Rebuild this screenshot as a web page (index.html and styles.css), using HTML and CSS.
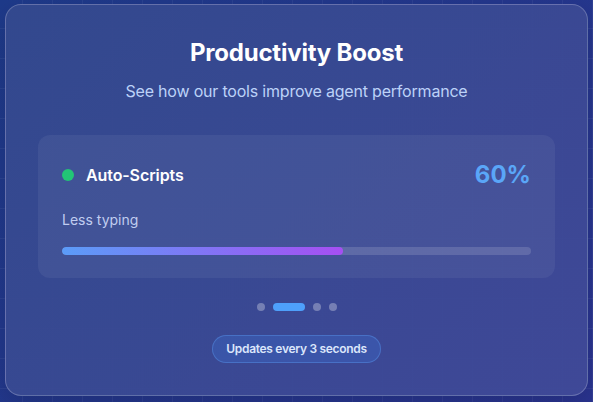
FILE: index.html
```html
<!DOCTYPE html>
<html lang="en">
<head>
<meta charset="utf-8">
<title>Productivity Boost</title>
<link rel="stylesheet" href="styles.css">
</head>
<body>
  <main class="card">
    <header class="card-head">
      <h1 class="title">Productivity Boost</h1>
      <p class="subtitle">See how our tools improve agent performance</p>
    </header>

    <section class="metric">
      <div class="metric-head">
        <div class="metric-name">
          <span class="status-dot"></span>
          <span class="name">Auto-Scripts</span>
        </div>
        <span class="value">60%</span>
      </div>
      <p class="metric-desc">Less typing</p>
      <div class="track"><div class="fill" style="width: 60%"></div></div>
    </section>

    <nav class="pager">
      <span class="dot"></span>
      <span class="dot active"></span>
      <span class="dot"></span>
      <span class="dot"></span>
    </nav>

    <div class="badge-row">
      <span class="badge">Updates every 3 seconds</span>
    </div>
  </main>
</body>
</html>
```

FILE: styles.css
```css
* { box-sizing: border-box; }

html, body { height: 100%; }

body {
  margin: 0;
  padding: 4px 5px 6px 5px;
  font-family: Inter, "Noto Sans", "Liberation Sans", sans-serif;
  color: #ffffff;
  background-color: #1f3585;
  background-image:
    linear-gradient(to right, rgba(255,255,255,0.05) 1px, transparent 1px),
    linear-gradient(to bottom, rgba(255,255,255,0.05) 1px, transparent 1px),
    linear-gradient(135deg, #1e3a8a 0%, #2a3490 100%);
  background-size: 30px 30px, 30px 30px, 100% 100%;
  background-position: 22px 28px, 22px 28px, 0 0;
}

.card {
  display: flex;
  flex-direction: column;
  padding: 32px;
  border: 1px solid rgba(255,255,255,0.22);
  border-radius: 16px;
  background: linear-gradient(135deg, rgba(52,73,142,0.95) 0%, rgba(64,74,152,0.95) 100%);
  box-shadow: 0 10px 30px rgba(0,0,0,0.15);
}

.card-head {
  text-align: center;
  margin-bottom: 32px;
}

.title {
  margin: 0;
  font-size: 24px;
  line-height: 32px;
  font-weight: 700;
  letter-spacing: -0.2px;
}

.subtitle {
  margin: 10px 0 0;
  font-size: 16px;
  line-height: 24px;
  letter-spacing: -0.2px;
  color: #bcd2f8;
}

.metric {
  padding: 24px 24px 23px;
  border-radius: 12px;
  background: rgba(255,255,255,0.055);
}

.metric-head {
  display: flex;
  align-items: center;
  justify-content: space-between;
}

.metric-name {
  display: flex;
  align-items: center;
  gap: 12px;
}

.status-dot {
  width: 12px;
  height: 12px;
  border-radius: 50%;
  background: #22c576;
}

.name {
  font-size: 16px;
  font-weight: 600;
  line-height: 24px;
  letter-spacing: -0.1px;
}

.value {
  font-size: 24px;
  line-height: 32px;
  font-weight: 700;
  color: #5aa6f8;
}

.metric-desc {
  margin: 19px 0 0;
  font-size: 14px;
  line-height: 20px;
  color: #c0cdf0;
}

.track {
  margin-top: 17px;
  height: 8px;
  border-radius: 4px;
  background: rgba(255,255,255,0.14);
  overflow: hidden;
}

.fill {
  height: 100%;
  border-radius: 4px;
  background: linear-gradient(to right, #5b9cf8, #a64ff2);
}

.pager {
  display: flex;
  justify-content: center;
  gap: 8px;
  margin-top: 25px;
}

.dot {
  width: 8px;
  height: 8px;
  border-radius: 4px;
  background: rgba(255,255,255,0.3);
}

.dot.active {
  width: 32px;
  background: #4ea0fb;
}

.badge-row {
  display: flex;
  justify-content: center;
  margin-top: 24px;
}

.badge {
  padding: 5px 13px;
  border-radius: 999px;
  border: 1px solid rgba(96,165,250,0.35);
  background: rgba(59,130,246,0.22);
  font-size: 12px;
  line-height: 16px;
  font-weight: 600;
  letter-spacing: -0.3px;
  color: #dbe6fb;
}
```
